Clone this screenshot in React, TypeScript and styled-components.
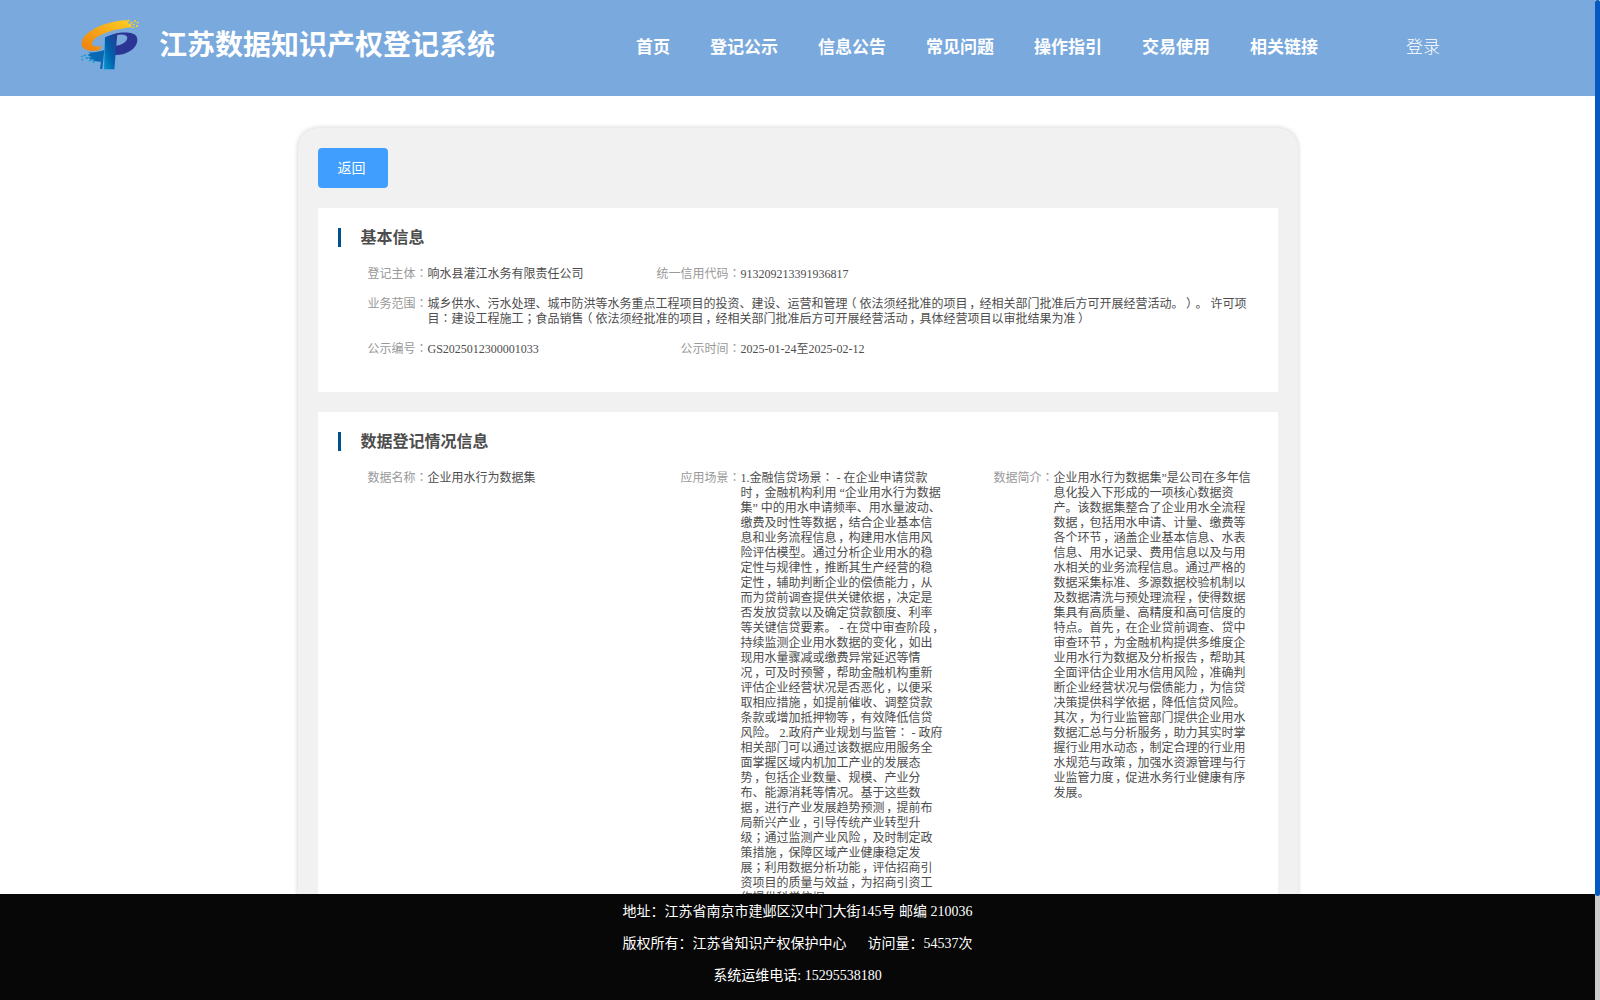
import React from 'react';
import styled, { createGlobalStyle } from 'styled-components';

const GlobalStyle = createGlobalStyle`
  * { box-sizing: border-box; }
  html, body { margin: 0; height: 100%; overflow: hidden; background: #fff; }
  body {
    font-family: "Liberation Serif", "Noto Sans CJK SC", serif;
    font-size: 12px;
    color: #4d4d4d;
    text-spacing-trim: space-all;
    font-kerning: none;
  }
`;

const Screen = styled.div`
  display: grid;
  grid-template-columns: 1fr 5px;
  height: 1000px;
  overflow: hidden;
`;

const Page = styled.div`
  display: flex;
  flex-direction: column;
  height: 1000px;
  min-width: 0;
`;

const Header = styled.header`
  display: flex;
  align-items: center;
  flex: none;
  height: 96px;
  padding: 0 0 5px 80px;
  background: #79a9dd;
  color: #fff;
`;

const Logo = styled.svg`
  flex: none;
  width: 60px;
  height: 54px;
  margin-bottom: 3px;
`;

const SiteTitle = styled.h1`
  flex: none;
  width: 477px;
  margin: 0 0 0 19px;
  font-size: 28px;
  line-height: 40px;
  font-weight: 700;
  white-space: nowrap;
`;

const Nav = styled.nav`
  display: flex;
  gap: 40px;
  padding-top: 4px;
  font-size: 17px;
  line-height: 26px;
  font-weight: 600;
  white-space: nowrap;
`;

const Login = styled.a`
  margin-left: 88px;
  padding-top: 4px;
  font-size: 17px;
  line-height: 26px;
  font-weight: 300;
`;

const Main = styled.main`
  flex: 1;
  min-height: 0;
  overflow: hidden;
  padding-top: 32px;
`;

const Card = styled.div`
  display: flex;
  flex-direction: column;
  align-items: flex-start;
  gap: 20px;
  width: 1000px;
  height: 1100px;
  margin: 0 auto;
  padding: 20px;
  background: #f1f1f1;
  border-radius: 20px;
  box-shadow: 0 0 5px rgba(0, 0, 0, 0.2);
`;

const BackButton = styled.button`
  flex: none;
  width: 70px;
  height: 40px;
  padding: 0 2px 2px 0;
  border: 0;
  border-radius: 4px;
  background: #409eff;
  color: #fff;
  font: 14px "Liberation Serif", "Noto Sans CJK SC", serif;
`;

const Section = styled.section<{ $height: number }>`
  flex: none;
  width: 960px;
  height: ${(p) => p.$height}px;
  padding: 20px;
  background: #fff;
`;

const SectionTitle = styled.h2`
  height: 19px;
  margin: 0 0 20px;
  padding-left: 20px;
  border-left: 3px solid #00508f;
  font-size: 16px;
  line-height: 19px;
  font-weight: 700;
`;

const Fields = styled.div`
  display: grid;
  grid-template-columns: repeat(3, 313px);
  row-gap: 15px;
  padding-left: 1px;
`;

const Field = styled.div<{ $span?: number }>`
  display: flex;
  grid-column: span ${(p) => p.$span ?? 1};
  line-height: 15px;
  white-space: nowrap;
`;

const Label = styled.div`
  flex: none;
  width: 89px;
  height: 15px;
  text-align: right;
  color: #999;
`;

const Line = styled.div`
  height: 15px;
`;

const Mark = styled.span<{ $shift: number }>`
  display: inline-block;
  width: 1em;
  line-height: 0;
  text-indent: ${(p) => p.$shift}em;
`;

const CenteredMark = styled.span`
  font-family: "Noto Sans CJK TC", sans-serif;
  line-height: 0;
`;

const Footer = styled.footer`
  flex: none;
  height: 106px;
  padding-top: 2px;
  background: #070707;
  color: #fff;
  font-size: 14px;
  line-height: 32px;
  text-align: center;
  white-space: pre;
`;

const ScrollTrack = styled.div`
  height: 1000px;
  background: #ccc;
`;

const ScrollThumb = styled.div`
  height: 896px;
  border-radius: 3px;
  background: #0559c1;
`;

const markShift: Record<string, number> = { '，': 0.15, '（': -0.25, '）': 0.2 };

/* Sets colons, commas and brackets near the middle of their full-width cell. */
const Text = ({ children }: { children: string }) => (
  <>
    {children.split(/([：；，（）])/).map((part, i) => {
      if (part === '：' || part === '；') return <CenteredMark key={i}>{part}</CenteredMark>;
      if (part in markShift) return <Mark key={i} $shift={markShift[part]}>{part}</Mark>;
      return part;
    })}
  </>
);

const Item = ({ label, lines, span }: { label: string; lines: string[]; span?: number }) => (
  <Field $span={span}>
    <Label><Text>{label + '：'}</Text></Label>
    <div>
      {lines.map((l) => <Line key={l}><Text>{l}</Text></Line>)}
    </div>
  </Field>
);

const menu = ['首页', '登记公示', '信息公告', '常见问题', '操作指引', '交易使用', '相关链接'];

const scope = [
  '城乡供水、污水处理、城市防洪等水务重点工程项目的投资、建设、运营和管理（依法须经批准的项目，经相关部门批准后方可开展经营活动。）。 许可项',
  '目：建设工程施工；食品销售（依法须经批准的项目，经相关部门批准后方可开展经营活动，具体经营项目以审批结果为准）',
];

const usage = [
  '1.金融信贷场景： - 在企业申请贷款',
  '时，金融机构利用 “企业用水行为数据',
  '集” 中的用水申请频率、用水量波动、',
  '缴费及时性等数据，结合企业基本信',
  '息和业务流程信息，构建用水信用风',
  '险评估模型。通过分析企业用水的稳',
  '定性与规律性，推断其生产经营的稳',
  '定性，辅助判断企业的偿债能力，从',
  '而为贷前调查提供关键依据，决定是',
  '否发放贷款以及确定贷款额度、利率',
  '等关键信贷要素。 - 在贷中审查阶段，',
  '持续监测企业用水数据的变化，如出',
  '现用水量骤减或缴费异常延迟等情',
  '况，可及时预警，帮助金融机构重新',
  '评估企业经营状况是否恶化，以便采',
  '取相应措施，如提前催收、调整贷款',
  '条款或增加抵押物等，有效降低信贷',
  '风险。 2.政府产业规划与监管： - 政府',
  '相关部门可以通过该数据应用服务全',
  '面掌握区域内机加工产业的发展态',
  '势，包括企业数量、规模、产业分',
  '布、能源消耗等情况。基于这些数',
  '据，进行产业发展趋势预测，提前布',
  '局新兴产业，引导传统产业转型升',
  '级；通过监测产业风险，及时制定政',
  '策措施，保障区域产业健康稳定发',
  '展；利用数据分析功能，评估招商引',
  '资项目的质量与效益，为招商引资工',
  '作提供科学依据。',
];

const summary = [
  '企业用水行为数据集”是公司在多年信',
  '息化投入下形成的一项核心数据资',
  '产。该数据集整合了企业用水全流程',
  '数据，包括用水申请、计量、缴费等',
  '各个环节，涵盖企业基本信息、水表',
  '信息、用水记录、费用信息以及与用',
  '水相关的业务流程信息。通过严格的',
  '数据采集标准、多源数据校验机制以',
  '及数据清洗与预处理流程，使得数据',
  '集具有高质量、高精度和高可信度的',
  '特点。首先，在企业贷前调查、贷中',
  '审查环节，为金融机构提供多维度企',
  '业用水行为数据及分析报告，帮助其',
  '全面评估企业用水信用风险，准确判',
  '断企业经营状况与偿债能力，为信贷',
  '决策提供科学依据，降低信贷风险。',
  '其次，为行业监管部门提供企业用水',
  '数据汇总与分析服务，助力其实时掌',
  '握行业用水动态，制定合理的行业用',
  '水规范与政策，加强水资源管理与行',
  '业监管力度，促进水务行业健康有序',
  '发展。',
];

const BrandMark = () => (
  <Logo viewBox="60 52 180 162">
    <defs>
      <linearGradient id="swoosh" x1="0" y1="1" x2="1" y2="0">
        <stop offset="0" stopColor="#ef7d0c" />
        <stop offset="1" stopColor="#fdd023" />
      </linearGradient>
      <linearGradient id="stem" x1="0" y1="1" x2="1" y2="0">
        <stop offset="0" stopColor="#0099d0" />
        <stop offset="0.45" stopColor="#0062ad" />
        <stop offset="1" stopColor="#2b3593" />
      </linearGradient>
    </defs>
    <path fill="url(#swoosh)" d="M190 62C128 68 65 99 65 132c0 18 23 25 53 20l6-13c-22 4-32-1-26-13 9-19 60-38 120-43l-6-5 3-5-12-2 3-5-8-4z" />
    <path fill="#fdd023" d="M202 60h7v5h-7zM211 66h7v5h-7zM222 62h6v4h-6zM218 72h6v5h-6zM230 67h6v4h-6zM206 73h7v5h-7zM228 77h6v5h-6zM217 81h6v4h-6z" />
    <path fill="#2b3593" fillRule="evenodd" d="M134 115c20-14 51-19 73-16 18 2 26 10 25 24-2 24-32 44-68 43l2-28c18-2 34-10 36-24 0-9-15-13-37-7l-5 5z" />
    <path fill="url(#stem)" d="M135 113l37-12-9 108h-31z" />
    <path fill="#0868b2" d="M133 151l-6 57h-7l3-22c-15 0-29-4-39-12l8-3-10-6 10-3-7-4c16 1 33-1 48-7z" />
    <path fill="#1499d5" d="M63 168h5v5h-5zM71 165h7v5h-7zM77 173h7v5h-7zM65 178h5v4h-5zM86 181h7v4h-7zM95 177h6v5h-6zM88 170h6v5h-6zM98 185h6v4h-6z" />
  </Logo>
);

export default function App() {
  return (
    <Screen>
      <GlobalStyle />
      <Page>
        <Header>
          <BrandMark />
          <SiteTitle>江苏数据知识产权登记系统</SiteTitle>
          <Nav>{menu.map((m) => <span key={m}>{m}</span>)}</Nav>
          <Login>登录</Login>
        </Header>
        <Main>
          <Card>
            <BackButton>返回</BackButton>
            <Section $height={184}>
              <SectionTitle>基本信息</SectionTitle>
              <Fields>
                <Item label="登记主体" lines={['响水县灌江水务有限责任公司']} />
                <Item label="统一信用代码" lines={['913209213391936817']} span={2} />
                <Item label="业务范围" lines={scope} span={3} />
                <Item label="公示编号" lines={['GS2025012300001033']} />
                <Item label="公示时间" lines={['2025-01-24至2025-02-12']} />
              </Fields>
            </Section>
            <Section $height={800}>
              <SectionTitle>数据登记情况信息</SectionTitle>
              <Fields>
                <Item label="数据名称" lines={['企业用水行为数据集']} />
                <Item label="应用场景" lines={usage} />
                <Item label="数据简介" lines={summary} />
              </Fields>
            </Section>
          </Card>
        </Main>
        <Footer>
          <div>地址：江苏省南京市建邺区汉中门大街145号 邮编 210036</div>
          <div>{'版权所有：江苏省知识产权保护中心\u00a0\u00a0\u00a0\u00a0 \u00a0访问量：54537次'}</div>
          <div>系统运维电话: 15295538180</div>
        </Footer>
      </Page>
      <ScrollTrack><ScrollThumb /></ScrollTrack>
    </Screen>
  );
}
